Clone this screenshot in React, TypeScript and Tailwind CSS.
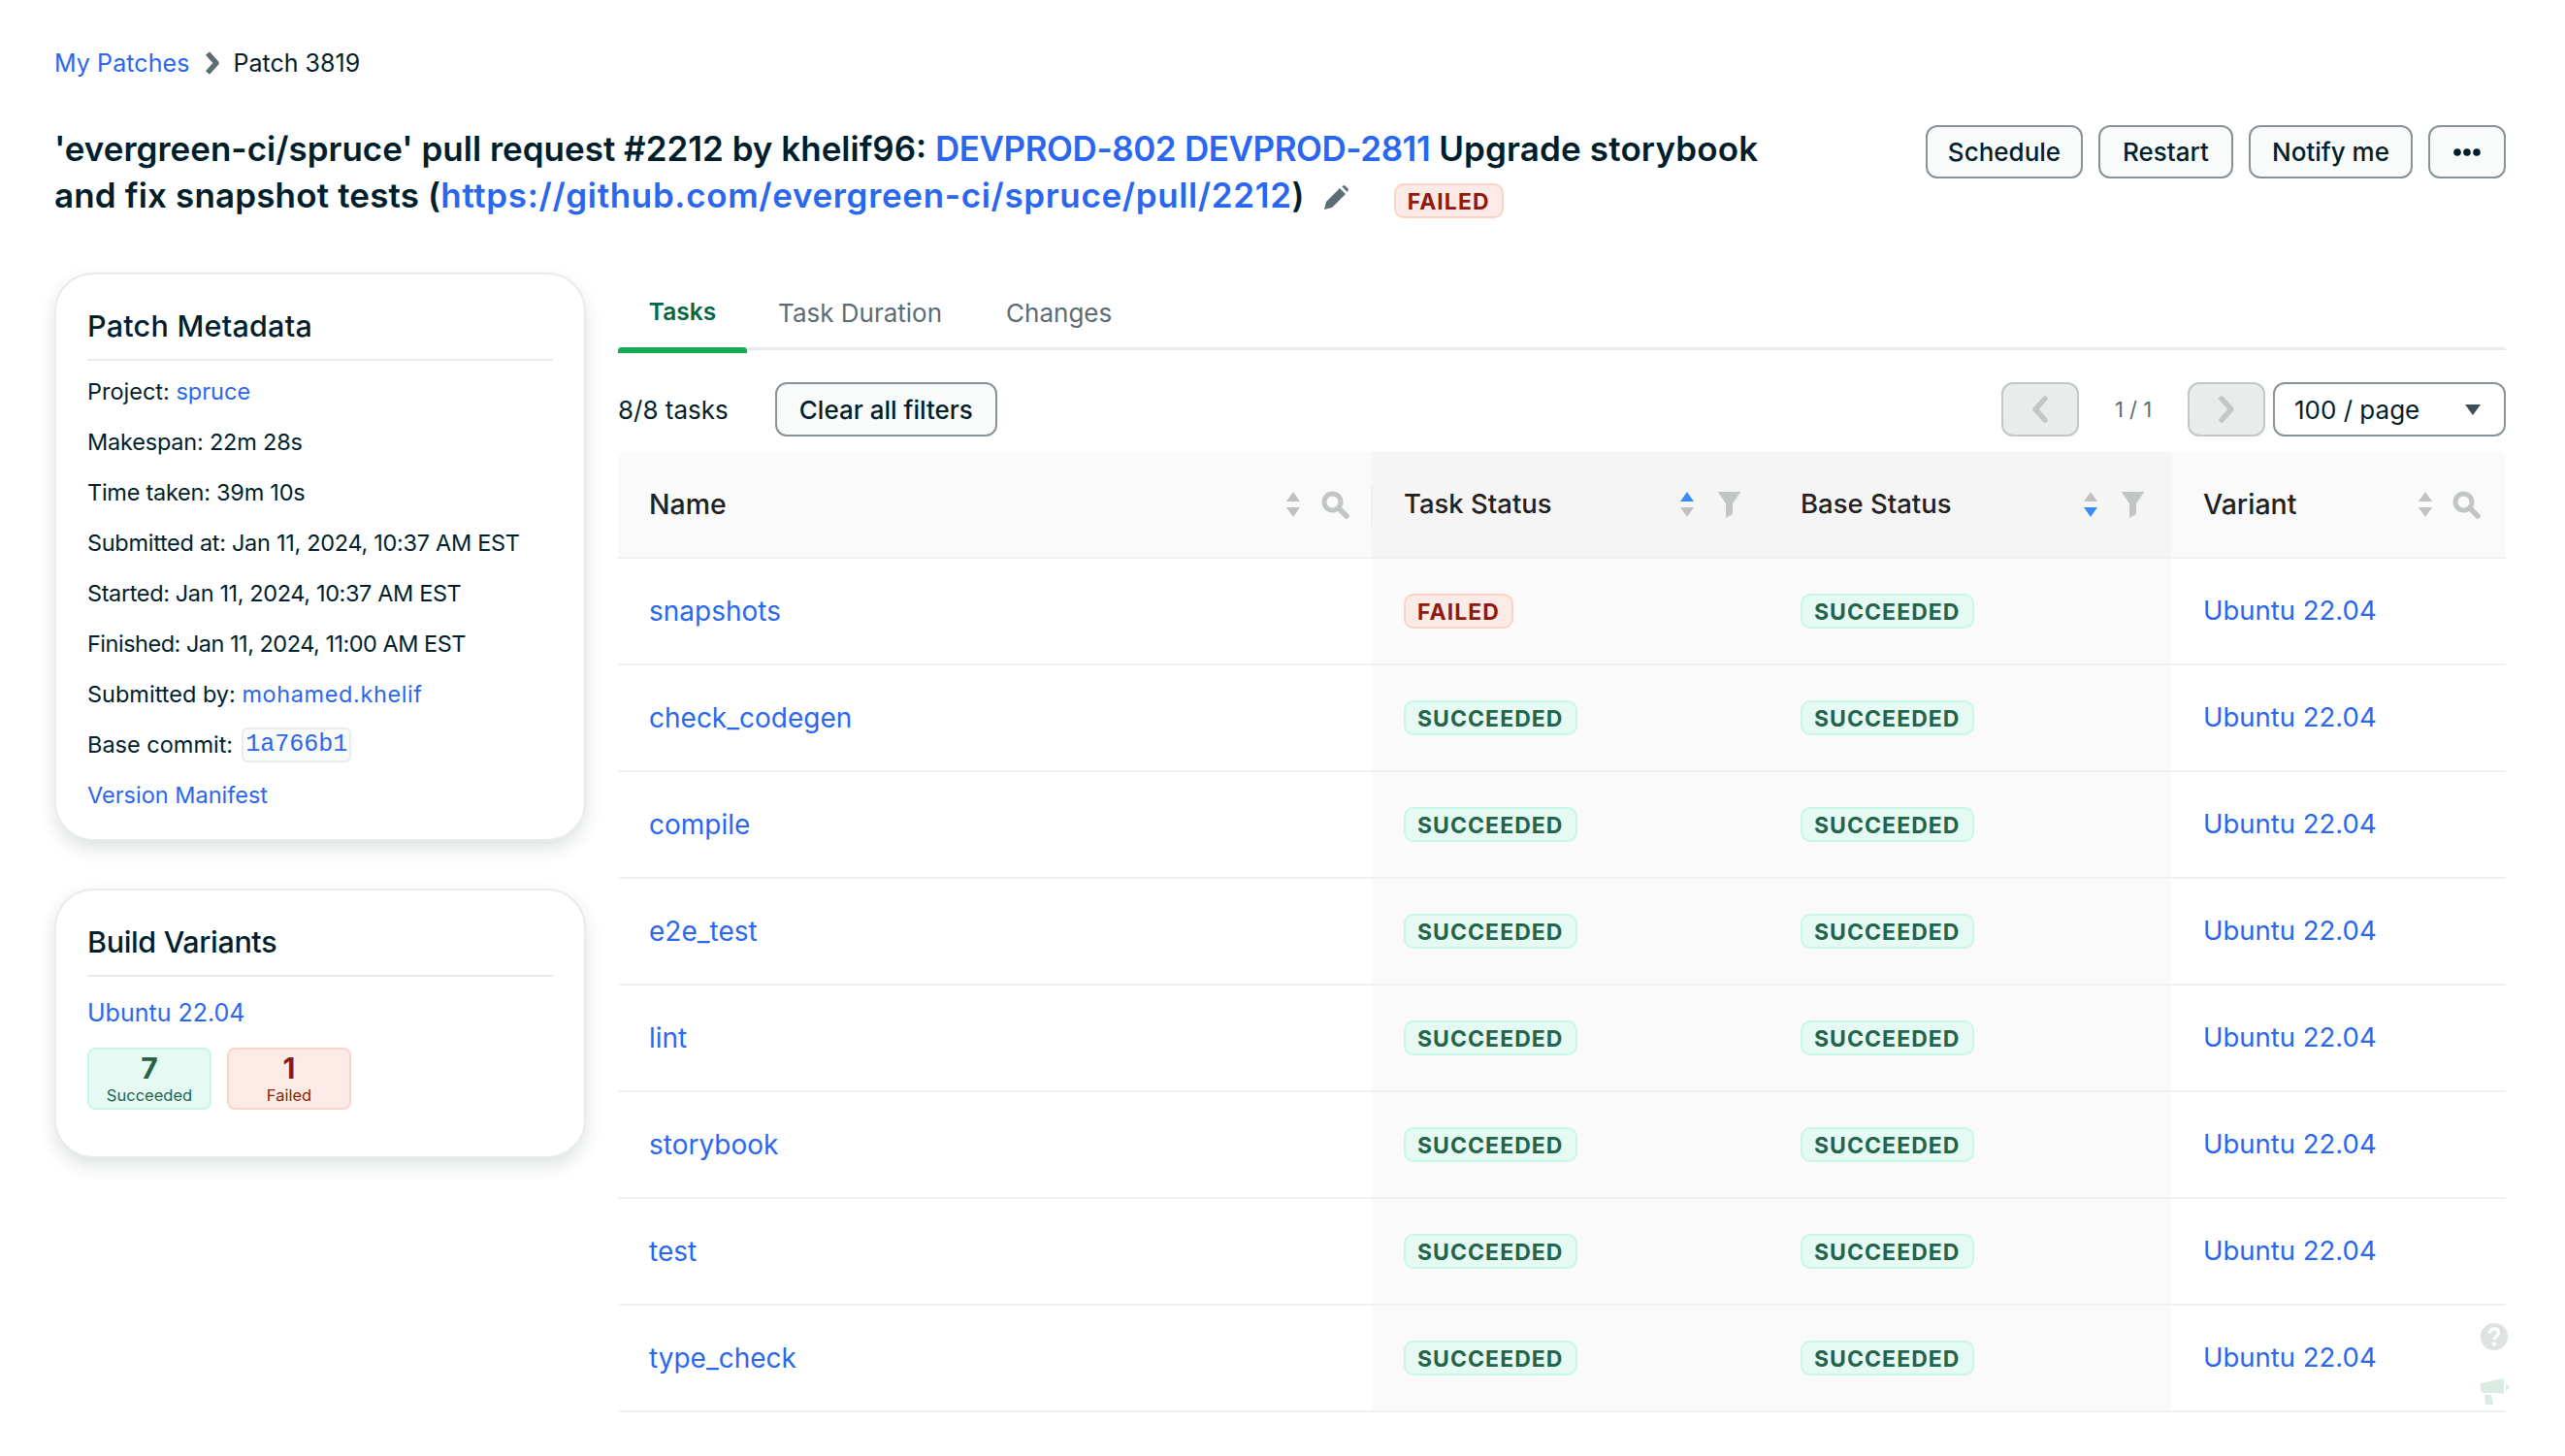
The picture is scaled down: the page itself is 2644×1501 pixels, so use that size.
const FONT = "font-['Inter','Liberation_Sans',sans-serif]";

const rows = [
  ["snapshots", "FAILED"],
  ["check_codegen", "SUCCEEDED"],
  ["compile", "SUCCEEDED"],
  ["e2e_test", "SUCCEEDED"],
  ["lint", "SUCCEEDED"],
  ["storybook", "SUCCEEDED"],
  ["test", "SUCCEEDED"],
  ["type_check", "SUCCEEDED"],
];

function Badge({ status }: { status: string }) {
  const failed = status === "FAILED";
  return (
    <span
      className={
        "inline-flex h-[36px] items-center rounded-[10px] border-2 px-[12px] pt-[2px] text-[23px] font-bold tracking-[1.05px] " +
        (failed
          ? "border-[#f9d3c5] bg-[#fbeae6] text-[#8f1a10]"
          : "border-[#c9f7e6] bg-[#e6faf4] text-[#24644a]")
      }
    >
      {status}
    </span>
  );
}

function Sort({ active }: { active?: "up" | "down" }) {
  return (
    <svg width="16" height="28" viewBox="0 0 16 28" className="shrink-0">
      <path d="M8 1 L15 11 H1 Z" fill={active === "up" ? "#3b8bff" : "#bfc2c2"} />
      <path d="M8 27 L15 17 H1 Z" fill={active === "down" ? "#3b8bff" : "#bfc2c2"} />
    </svg>
  );
}

function Search() {
  return (
    <svg width="29" height="29" viewBox="0 0 29 29" fill="none" className="shrink-0">
      <circle cx="11.5" cy="11.5" r="8.5" stroke="#c1c5c5" strokeWidth="5" />
      <path d="M18 18 L26 26" stroke="#c1c5c5" strokeWidth="5.5" strokeLinecap="round" />
    </svg>
  );
}

function Funnel() {
  return (
    <svg width="25" height="28" viewBox="0 0 25 28" className="shrink-0">
      <path d="M0.5 1 H24.5 L16 13 V24 L9 28 V13 Z" fill="#c1c5c5" />
    </svg>
  );
}

function Head({
  label,
  bg,
  pr,
  sort,
  icon,
  divider,
  gap,
  size,
}: {
  label: string;
  bg: string;
  pr: string;
  sort?: "up" | "down";
  icon: React.ReactNode;
  divider?: boolean;
  gap: string;
  size: string;
}) {
  return (
    <div className={"relative flex items-center pl-[32px] " + bg + " " + pr}>
      <span className={"flex-1 font-medium text-[#212121] " + size}>{label}</span>
      <div className={"flex items-center " + gap}>
        <Sort active={sort} />
        {icon}
      </div>
      {divider && <div className="absolute right-0 top-[32px] h-[45px] w-[2px] bg-[#f0f0f0]" />}
    </div>
  );
}

function Card({
  title,
  children,
  pb,
  tracking,
}: {
  title: string;
  children: React.ReactNode;
  pb: string;
  tracking: string;
}) {
  return (
    <section
      className={
        "rounded-[40px] border-2 border-[#e8edeb] bg-white px-[32px] pt-[33px] shadow-[0_8px_18px_rgba(0,30,43,0.13)] " +
        pb
      }
    >
      <h2
        className={
          "h-[56px] border-b-2 border-[#e8edeb] pb-[14px] text-[30.5px] font-medium leading-[40px] text-[#001e2b] " +
          tracking
        }
      >
        {title}
      </h2>
      {children}
    </section>
  );
}

const link = "text-[#2b66ee]";

function Meta({ children, tracking = "" }: { children: React.ReactNode; tracking?: string }) {
  return (
    <div className={"flex h-[52px] items-center whitespace-pre text-[23.5px] text-[#001e2b] " + tracking}>
      {children}
    </div>
  );
}

function ActionButton({ children, width }: { children: React.ReactNode; width: string }) {
  return (
    <button
      className={
        "flex h-[55px] items-center justify-center rounded-[12px] border-2 border-[#889397] bg-[#f9fbfa] text-[26px] font-medium text-[#001e2b] " +
        width
      }
    >
      {children}
    </button>
  );
}

export default function App() {
  return (
    <div className={"relative min-h-[1501px] bg-white pl-[56px] pr-[61px] pt-[50px] " + FONT}>
      <nav className="flex h-[30px] items-center text-[25px] leading-[30px] text-[#001e2b]">
        <span className={"tracking-[0.1px] " + link}>My Patches</span>
        <svg width="18" height="26" viewBox="0 0 18 26" fill="none" className="ml-[14px] mr-[13px]">
          <path d="M4 3 L13 13 L4 23" stroke="#5c6c75" strokeWidth="5.5" strokeLinejoin="round" />
        </svg>
        <span>Patch 3819</span>
      </nav>

      <header className="mt-[49px] flex items-start justify-between">
        <h1 className="w-[1790px] text-[35px] font-semibold leading-[48px] text-[#001e2b]">
          'evergreen-ci/spruce' pull request #2212 by khelif96:{" "}
          <span className={"tracking-[-0.45px] " + link}>DEVPROD-802</span>{" "}
          <span className={"tracking-[-0.45px] " + link}>DEVPROD-2811</span>{" "}
          <span className="tracking-[0.15px]">Upgrade storybook and fix snapshot tests (</span>
          <span className={"tracking-[0.65px] " + link}>https://github.com/evergreen-ci/spruce/pull/2212</span>)
          <svg width="28" height="28" viewBox="0 0 28 28" className="ml-[18px] inline-block align-[-4px]">
            <path d="M2 26 L4 18 L18 4 L24 10 L10 24 Z M20 2 L23 1 L27 5 L26 8 Z" fill="#5c6c75" />
          </svg>
          <span className="ml-[46px] inline-flex h-[36px] items-center rounded-[10px] border-2 border-[#f9d3c5] bg-[#fbeae6] px-[12px] pt-[2px] align-[-2px] text-[23px] font-bold leading-[30px] tracking-[1.05px] text-[#8f1a10]">
            FAILED
          </span>
        </h1>
        <div className="flex gap-[16px]">
          <ActionButton width="w-[162px]">Schedule</ActionButton>
          <ActionButton width="w-[139px]">Restart</ActionButton>
          <ActionButton width="w-[169px]">Notify me</ActionButton>
          <button className="flex h-[55px] w-[80px] items-center justify-center rounded-[12px] border-2 border-[#889397] bg-[#f9fbfa]">
            <svg width="28" height="8" viewBox="0 0 28 8" fill="#001e2b">
              <circle cx="4" cy="4" r="3.8" />
              <circle cx="14" cy="4" r="3.8" />
              <circle cx="24" cy="4" r="3.8" />
            </svg>
          </button>
        </div>
      </header>

      <main className="mt-[56px] flex items-start gap-[33px]">
        <aside className="flex w-[548px] shrink-0 flex-col gap-[49px]">
          <Card title="Patch Metadata" pb="pb-[19px]" tracking="tracking-[0.25px]">
            <div className="mt-[6px]">
              <Meta>
                Project: <span className={link}>spruce</span>
              </Meta>
              <Meta tracking="tracking-[-0.2px]">Makespan: 22m 28s</Meta>
              <Meta tracking="tracking-[-0.25px]">Time taken: 39m 10s</Meta>
              <Meta tracking="tracking-[-0.3px]">Submitted at: Jan 11, 2024, 10:37 AM EST</Meta>
              <Meta tracking="tracking-[-0.38px]">Started: Jan 11, 2024, 10:37 AM EST</Meta>
              <Meta tracking="tracking-[-0.5px]">Finished: Jan 11, 2024, 11:00 AM EST</Meta>
              <Meta>
                Submitted by: <span className={"tracking-[0.6px] " + link}>mohamed.khelif</span>
              </Meta>
              <Meta>
                Base commit:
                <span className="ml-[9px] rounded-[6px] border-2 border-[#e8edeb] bg-[#f9fbfa] px-[2px] font-['Liberation_Mono',monospace] text-[25px] leading-[32px] text-[#2b66ee]">
                  1a766b1
                </span>
              </Meta>
              <Meta>
                <span className={link}>Version Manifest</span>
              </Meta>
            </div>
          </Card>
          <Card title="Build Variants" pb="pb-[48px]" tracking="tracking-[-0.35px]">
            <div className={"mt-[22px] text-[25px] leading-[30px] " + link}>Ubuntu 22.04</div>
            <div className="mt-[21px] flex gap-[16px]">
              <div className="flex h-[64px] w-[128px] flex-col items-center justify-center rounded-[8px] border-2 border-[#c9f7e6] bg-[#e6faf4] text-[#24644a]">
                <span className="text-[30px] font-bold leading-[34px]">7</span>
                <span className="text-[16.5px] leading-[22px]">Succeeded</span>
              </div>
              <div className="flex h-[64px] w-[128px] flex-col items-center justify-center rounded-[8px] border-2 border-[#f9d3c5] bg-[#fbeae6] text-[#8f1a10]">
                <span className="text-[30px] font-bold leading-[34px]">1</span>
                <span className="text-[16.5px] leading-[22px]">Failed</span>
              </div>
            </div>
          </Card>
        </aside>

        <div className="min-w-0 flex-1">
          <div className="flex h-[80px] items-start border-b-[3px] border-[#e8edeb] text-[26px]">
            <div className="relative flex h-[80px] w-[133px] justify-center pt-[22px] text-[24.5px] leading-[36px] font-semibold text-[#00684a]">
              Tasks
              <div className="absolute bottom-[-3px] left-0 right-0 h-[6px] rounded-t-[4px] bg-[#13aa52]" />
            </div>
            <div className="ml-[32px] pt-[22px] text-[#5c6c75]">Task Duration</div>
            <div className="ml-[66px] pt-[22px] text-[#5c6c75]">Changes</div>
          </div>

          <div className="mt-[33px] flex h-[56px] items-center">
            <span className="text-[26px] text-[#001e2b]">8/8 tasks</span>
            <button className="ml-[48px] flex h-[56px] w-[229px] items-center justify-center rounded-[12px] border-2 border-[#889397] bg-[#f9fbfa] text-[26px] font-medium text-[#001e2b]">
              Clear all filters
            </button>
            <div className="ml-auto flex items-center">
              <div className="flex h-[56px] w-[80px] items-center justify-center rounded-[12px] border-2 border-[#c1c7c6] bg-[#e8edeb]">
                <svg width="20" height="30" viewBox="0 0 20 30" fill="none">
                  <path d="M15 4 L5 15 L15 26" stroke="#c1c7c6" strokeWidth="5.5" strokeLinecap="round" strokeLinejoin="round" />
                </svg>
              </div>
              <span className="w-[112px] text-center text-[22px] text-[#5c6c75]">1 / 1</span>
              <div className="flex h-[56px] w-[80px] items-center justify-center rounded-[12px] border-2 border-[#c1c7c6] bg-[#e8edeb]">
                <svg width="20" height="30" viewBox="0 0 20 30" fill="none">
                  <path d="M5 4 L15 15 L5 26" stroke="#c1c7c6" strokeWidth="5.5" strokeLinecap="round" strokeLinejoin="round" />
                </svg>
              </div>
              <div className="ml-[8px] flex h-[56px] w-[240px] items-center justify-between rounded-[12px] border-2 border-[#889397] bg-white pl-[20px] pr-[24px] text-[26px] text-[#001e2b]">
                100 / page
                <svg width="16" height="11" viewBox="0 0 16 11">
                  <path d="M0 0 H16 L8 11 Z" fill="#3d4f58" />
                </svg>
              </div>
            </div>
          </div>

          <div className="mt-[16px]">
            <div className="grid h-[110px] grid-cols-[778px_409px_415px_344px] overflow-hidden rounded-t-[8px] border-b-2 border-[#f0f0f0]">
              <Head label="Name" size="text-[28.5px]" bg="bg-[#fafafa]" pr="pr-[24px]" gap="gap-[21px]" icon={<Search />} divider />
              <Head label="Task Status" size="text-[27.5px]" bg="bg-[#f5f5f5]" pr="pr-[29px]" gap="gap-[23px]" sort="up" icon={<Funnel />} />
              <Head label="Base Status" size="text-[27.5px]" bg="bg-[#f5f5f5]" pr="pr-[28px]" gap="gap-[23px]" sort="down" icon={<Funnel />} />
              <Head label="Variant" size="text-[28.5px]" bg="bg-[#fafafa]" pr="pr-[26px]" gap="gap-[20px]" icon={<Search />} />
            </div>
            {rows.map(([name, status]) => (
              <div key={name} className="grid h-[110px] grid-cols-[778px_409px_415px_344px] border-b-2 border-[#f0f0f0] text-[28px]">
                <div className={"flex items-center pl-[32px] " + link}>{name}</div>
                <div className="flex items-center bg-[#fafafa] pl-[32px]">
                  <Badge status={status} />
                </div>
                <div className="flex items-center bg-[#fafafa] pl-[32px]">
                  <Badge status="SUCCEEDED" />
                </div>
                <div className={"flex items-center pl-[32px] text-[27.5px] " + link}>Ubuntu 22.04</div>
              </div>
            ))}
          </div>
        </div>
      </main>

      <svg width="28" height="28" viewBox="0 0 28 28" className="absolute left-[2557px] top-[1364px]">
        <circle cx="14" cy="14" r="14" fill="#dfe2e3" />
        <path d="M9.5 10.5 C9.5 4.5 18.5 4.5 18.5 10 C18.5 13.5 14 13.5 14 17" fill="none" stroke="white" strokeWidth="3.4" />
        <circle cx="14" cy="21.5" r="2.2" fill="white" />
      </svg>
      <svg width="31" height="28" viewBox="0 0 31 28" className="absolute left-[2557px] top-[1421px]">
        <path d="M0 5 L24 0 V16 L14 15 H4 Q0 15 0 11 Z M4 17 H11 L13 27 H5 Z M26 6 L30 9 L26 13 Z" fill="#d9ebe2" />
      </svg>
    </div>
  );
}
